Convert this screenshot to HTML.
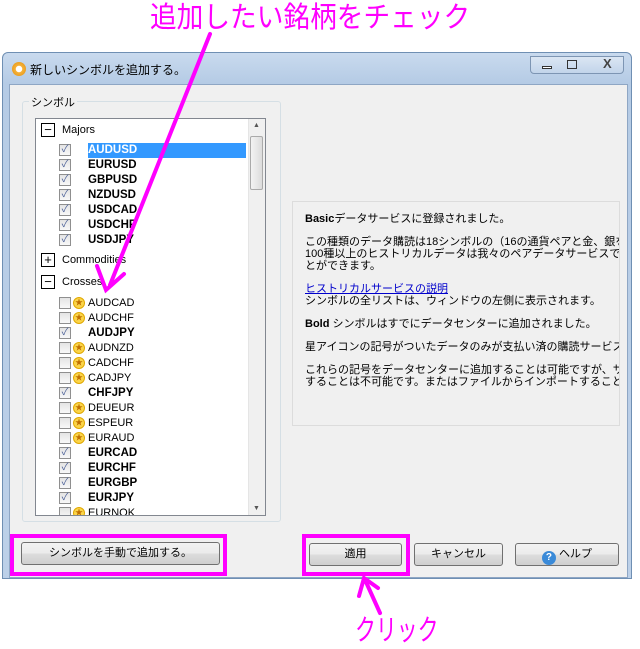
<!DOCTYPE html>
<html><head><meta charset="utf-8"><style>
*{margin:0;padding:0;box-sizing:border-box}
body{width:640px;height:649px;background:#fff;position:relative;overflow:hidden;font-family:"Liberation Sans","Noto Sans CJK JP",sans-serif;font-size:11px;color:#000}
.abs{position:absolute}
.win{left:2px;top:52px;width:630px;height:527px;border:1px solid #6f8fb3;border-radius:6px 6px 0 0;background:linear-gradient(#c9daee,#b5cbe5 30px,#bcd0e8);}
.body{left:9px;top:84px;width:619px;height:494px;background:#f0f0f0;border:1px solid #8ea6c4}
.title{left:30px;top:61px;font-size:12px}
.grp{left:22px;top:101px;width:259px;height:421px;border:1px solid #d5dfe5;border-radius:3px}
.list{left:35px;top:118px;width:231px;height:398px;background:#fff;border:1px solid #828790;overflow:hidden}
.row{position:absolute;left:0;height:15px;line-height:15px;width:212px}
.exp{position:absolute;left:5px;width:14px;height:14px;border:1px solid #000;background:#fff;font-size:13px;line-height:11px;text-align:center}
.cb{position:absolute;left:23px;top:1px;width:12px;height:12px;border:1px solid #8f8f8f;background:linear-gradient(#e4e4e4,#f8f8f8);font-size:10px;line-height:10px;color:#4a5f97;text-align:center}
.star{position:absolute;left:37px;top:1px;width:12px;height:12px;border-radius:50%;background:#fbd54a;border:1px solid #e0a800;font-size:8px;line-height:10px;text-align:center;color:#c07000}
.nm{position:absolute;left:52px}
.b{font-weight:bold;font-size:11.5px}
.sb{left:248px;top:119px;width:17px;height:396px;background:#f0f0f0;border-left:1px solid #e5e5e5}
.info{left:292px;top:201px;width:328px;height:225px;border:1px solid #dcdcdc;background:#f0f0f0;padding:11px 0 0 12px;font-size:11px;line-height:12px;white-space:nowrap;overflow:hidden}
.info p{margin-bottom:11px}
.btn{height:23px;border:1px solid #707070;border-radius:3px;background:linear-gradient(#f2f2f2,#ebebeb 50%,#dddddd 51%,#cfcfcf);text-align:center;line-height:21px;font-size:11px}
.mg{border:4px solid #ff00ff}
</style></head><body>
<div class="abs" style="left:150px;top:0;font-size:29px;color:#f0f;line-height:36px;transform:scaleX(0.92);transform-origin:0 0">追加したい銘柄をチェック</div>
<div class="abs win"></div>
<div class="abs" style="left:12px;top:62px;width:14px;height:14px;border-radius:50%;background:radial-gradient(#fff 30%,#f6b23a 35%,#e09010)"></div>
<div class="abs title">新しいシンボルを追加する。</div>
<div class="abs" style="left:530px;top:56px;width:94px;height:18px;border:1px solid #7d95b3;border-radius:0 0 4px 4px;background:linear-gradient(#dbe6f3,#c2d4ea)"></div>
<div class="abs" style="left:542px;top:66px;width:10px;height:3px;border:1px solid #333;background:#fff"></div>
<div class="abs" style="left:567px;top:60px;width:10px;height:9px;border:1px solid #333"></div>
<div class="abs" style="left:603px;top:56px;font-size:13px;font-weight:bold;color:#444">X</div>
<div class="abs body"></div>
<div class="abs grp"></div>
<div class="abs" style="left:29px;top:94px;background:#f0f0f0;padding:0 2px;font-size:11px">シンボル</div>
<div class="abs list">
<div class="row" style="top:4px"><div class="exp" style="top:0">−</div><span class="nm" style="left:26px">Majors</span></div>
<div class="row" style="top:24px"><div class="cb">✓</div><div class="abs" style="left:52px;top:0;width:158px;height:15px;background:#3399ff"></div><span class="nm b" style="color:#fff">AUDUSD</span></div>
<div class="row" style="top:39px"><div class="cb">✓</div><span class="nm b">EURUSD</span></div>
<div class="row" style="top:54px"><div class="cb">✓</div><span class="nm b">GBPUSD</span></div>
<div class="row" style="top:69px"><div class="cb">✓</div><span class="nm b">NZDUSD</span></div>
<div class="row" style="top:84px"><div class="cb">✓</div><span class="nm b">USDCAD</span></div>
<div class="row" style="top:99px"><div class="cb">✓</div><span class="nm b">USDCHF</span></div>
<div class="row" style="top:114px"><div class="cb">✓</div><span class="nm b">USDJPY</span></div>
<div class="row" style="top:134px"><div class="exp" style="top:0">+</div><span class="nm" style="left:26px">Commodities</span></div>
<div class="row" style="top:156px"><div class="exp" style="top:0">−</div><span class="nm" style="left:26px">Crosses</span></div>
<div class="row" style="top:177px"><div class="cb"></div><div class="star">★</div><span class="nm">AUDCAD</span></div>
<div class="row" style="top:192px"><div class="cb"></div><div class="star">★</div><span class="nm">AUDCHF</span></div>
<div class="row" style="top:207px"><div class="cb">✓</div><span class="nm b">AUDJPY</span></div>
<div class="row" style="top:222px"><div class="cb"></div><div class="star">★</div><span class="nm">AUDNZD</span></div>
<div class="row" style="top:237px"><div class="cb"></div><div class="star">★</div><span class="nm">CADCHF</span></div>
<div class="row" style="top:252px"><div class="cb"></div><div class="star">★</div><span class="nm">CADJPY</span></div>
<div class="row" style="top:267px"><div class="cb">✓</div><span class="nm b">CHFJPY</span></div>
<div class="row" style="top:282px"><div class="cb"></div><div class="star">★</div><span class="nm">DEUEUR</span></div>
<div class="row" style="top:297px"><div class="cb"></div><div class="star">★</div><span class="nm">ESPEUR</span></div>
<div class="row" style="top:312px"><div class="cb"></div><div class="star">★</div><span class="nm">EURAUD</span></div>
<div class="row" style="top:327px"><div class="cb">✓</div><span class="nm b">EURCAD</span></div>
<div class="row" style="top:342px"><div class="cb">✓</div><span class="nm b">EURCHF</span></div>
<div class="row" style="top:357px"><div class="cb">✓</div><span class="nm b">EURGBP</span></div>
<div class="row" style="top:372px"><div class="cb">✓</div><span class="nm b">EURJPY</span></div>
<div class="row" style="top:387px"><div class="cb"></div><div class="star">★</div><span class="nm">EURNOK</span></div>
</div>
<div class="abs sb"></div>
<div class="abs" style="left:253px;top:122px;font-size:7px;color:#555">▲</div>
<div class="abs" style="left:250px;top:136px;width:13px;height:54px;border:1px solid #aaa;border-radius:2px;background:linear-gradient(90deg,#f3f3f3,#dcdcdc)"></div>
<div class="abs" style="left:253px;top:505px;font-size:7px;color:#555">▼</div>
<div class="abs info">
<p><b>Basic</b>データサービスに登録されました。</p>
<p>この種類のデータ購読は18シンボルの（16の通貨ペアと金、銀を含<br>100種以上のヒストリカルデータは我々のペアデータサービスで提供<br>とができます。</p>
<p><span style="color:#0000cc;text-decoration:underline">ヒストリカルサービスの説明</span><br>シンボルの全リストは、ウィンドウの左側に表示されます。</p>
<p><b>Bold</b> シンボルはすでにデータセンターに追加されました。</p>
<p>星アイコンの記号がついたデータのみが支払い済の購読サービス(</p>
<p>これらの記号をデータセンターに追加することは可能ですが、サーバ<br>することは不可能です。またはファイルからインポートすることは可能</p>
</div>
<div class="abs mg" style="left:10px;top:534px;width:217px;height:42px"></div>
<div class="abs btn" style="left:21px;top:542px;width:199px">シンボルを手動で追加する。</div>
<div class="abs mg" style="left:302px;top:534px;width:108px;height:42px"></div>
<div class="abs btn" style="left:309px;top:543px;width:93px">適用</div>
<div class="abs btn" style="left:414px;top:543px;width:89px">キャンセル</div>
<div class="abs btn" style="left:515px;top:543px;width:104px"><span style="display:inline-block;width:14px;height:14px;border-radius:50%;background:#3a8ad8;color:#fff;font-size:10px;line-height:14px;vertical-align:-3px;font-weight:bold">?</span> ヘルプ</div>
<svg class="abs" style="left:0;top:0" width="640" height="649">
<g stroke="#ff00ff" stroke-width="4" fill="none" stroke-linecap="round">
<line x1="210" y1="34" x2="110" y2="285"/>
<polyline points="97,266 106,290 124,274"/>
<line x1="380" y1="613" x2="366" y2="582"/>
<polyline points="359,596 364,578 378,588"/>
</g></svg>
<div class="abs" style="left:355px;top:614px;font-size:29px;color:#f0f;line-height:34px;transform:scaleX(0.72);transform-origin:0 0">クリック</div>
</body></html>
